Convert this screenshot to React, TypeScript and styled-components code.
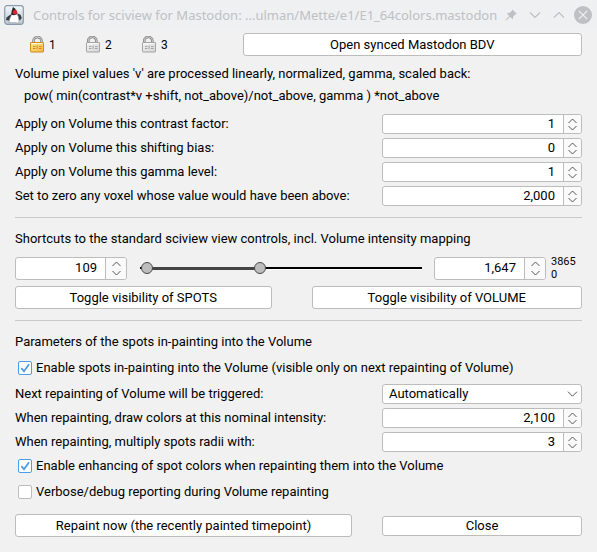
import React, { useId, useState } from "react";
import styled, { createGlobalStyle, css } from "styled-components";

const GlobalStyle = createGlobalStyle`
  *, *::before, *::after { box-sizing: border-box; }
  html, body { margin: 0; background: #f1f1f1; }
  body, button, input, select {
    font-family: Roboto, "Liberation Sans", sans-serif;
    font-size: 13px;
    line-height: 16px;
    color: #000;
  }
`;

const border = "#bcbcbc";

const Window = styled.div`
  min-height: 100vh;
  background: #f1f1f1;
`;

const TitleBar = styled.header`
  display: flex;
  align-items: center;
  height: 29px;
  padding: 0 5px 0 4px;
  background: #eff0f1;
`;

const Title = styled.h1`
  flex: 1;
  min-width: 0;
  margin: 0 0 0 9px;
  overflow: hidden;
  white-space: nowrap;
  text-overflow: ellipsis;
  font-family: "Noto Sans", sans-serif;
  font-size: 13px;
  font-weight: 400;
  line-height: 18px;
  color: #bdc1c4;
`;

const TitleActions = styled.div`
  display: flex;
  gap: 6px;
`;

const TitleButton = styled.button`
  display: flex;
  width: 18px;
  height: 18px;
  padding: 0;
  border: 0;
  background: none;
`;

const Content = styled.main`
  display: flex;
  flex-direction: column;
  padding: 4px 15px 14px;
`;

const TopRow = styled.div`
  display: grid;
  grid-template-columns: 228fr 340fr;
  align-items: center;
`;

const Locks = styled.div`
  display: flex;
  padding-left: 15px;
`;

const LockButton = styled.button`
  display: flex;
  align-items: center;
  gap: 4px;
  width: 56px;
  padding: 0;
  border: 0;
  background: none;
  font-size: 12px;
`;

const PushButton = styled.button<{ $compact?: boolean }>`
  height: ${(p) => (p.$compact ? 20 : 23)}px;
  padding: 0 8px;
  border: 1px solid ${border};
  border-radius: 3px;
  background: #fff;
  text-align: center;
  white-space: nowrap;
`;

const Formula = styled.div`
  display: grid;
  gap: 6px;
  margin: 10px 0;
  white-space: pre;
`;

const FormulaLine = styled.p<{ $indent?: boolean }>`
  margin: 0;
  padding-left: ${(p) => (p.$indent ? 9 : 0)}px;
`;

const Rows = styled.div`
  display: grid;
  gap: 4px;
`;

const FormRow = styled.div`
  display: grid;
  grid-template-columns: minmax(0, 1fr) 200px;
  align-items: center;
`;

const RowLabel = styled.label`
  white-space: nowrap;
`;

const Divider = styled.hr`
  width: 100%;
  height: 1px;
  margin: 11px 0;
  border: 0;
  background: #c9c9c9;
`;

const Heading = styled.h2`
  margin: 0;
  font-size: 13px;
  font-weight: 400;
  line-height: 20px;
`;

const SpinFrame = styled.div<{ $tall?: boolean }>`
  display: flex;
  width: ${(p) => (p.$tall ? "112px" : "100%")};
  height: ${(p) => (p.$tall ? 23 : 20)}px;
  border: 1px solid ${border};
  border-radius: 3px;
  overflow: hidden;
  background: #fff;
`;

const SpinInput = styled.input`
  flex: 1;
  min-width: 0;
  padding: 0 8px;
  border: 0;
  outline: 0;
  background: transparent;
  text-align: right;
`;

const SpinArrows = styled.div<{ $tall?: boolean }>`
  display: flex;
  flex-direction: column;
  justify-content: center;
  gap: ${(p) => (p.$tall ? 3 : 1)}px;
  width: ${(p) => (p.$tall ? 21 : 18)}px;
  border-left: 1px solid ${border};
  background: #fafafa;
`;

const SpinArrow = styled.button`
  display: flex;
  justify-content: center;
  padding: 0;
  border: 0;
  background: none;
`;

const SliderRow = styled.div`
  display: flex;
  align-items: center;
  margin: 6px 0 5px;
`;

const SliderBox = styled.div`
  flex: 1;
  min-width: 0;
  height: 20px;
  padding: 0 10px 0 12px;
`;

const SliderScale = styled.div`
  position: relative;
  height: 20px;
`;

const Track = styled.div`
  position: absolute;
  inset: 9px 2px auto 1px;
  height: 3px;
  border-bottom: 1px solid #fff;
  background: #000;
`;

const TrackFill = styled.div`
  position: absolute;
  top: 9px;
  height: 3px;
  background: #444;
`;

const thumb = css`
  width: 12px;
  height: 12px;
  border: 1px solid #4a4a4a;
  border-radius: 50%;
  background: #bdbdbd;
  pointer-events: auto;
`;

const RangeInput = styled.input`
  position: absolute;
  inset: 0 -6px;
  width: calc(100% + 12px);
  height: 20px;
  margin: 0;
  background: transparent;
  appearance: none;
  pointer-events: none;
  &::-webkit-slider-thumb { appearance: none; ${thumb} }
  &::-moz-range-thumb { ${thumb} }
`;

const Bounds = styled.div`
  width: 36px;
  padding-left: 5px;
  font-size: 11px;
  line-height: 13px;
`;

const ToggleRow = styled.div`
  display: grid;
  grid-template-columns: 257fr 271fr;
  gap: 40px;
`;

const CheckLabel = styled.label<{ $height: number }>`
  display: flex;
  align-items: center;
  gap: 4px;
  height: ${(p) => p.$height}px;
  padding-left: 3px;
  white-space: nowrap;
`;

const CheckBox = styled.span`
  display: grid;
  width: 14px;
  height: 14px;
`;

const CheckInput = styled.input`
  grid-area: 1 / 1;
  width: 14px;
  height: 14px;
  margin: 0;
  border: 1px solid ${border};
  border-radius: 2px;
  background: #fff;
  appearance: none;
  &:checked { border-color: #4d9ee6; }
  &:checked + svg { visibility: visible; }
`;

const CheckMark = styled.svg`
  grid-area: 1 / 1;
  visibility: hidden;
  pointer-events: none;
`;

const SelectFrame = styled.div`
  display: grid;
  align-items: center;
`;

const Select = styled.select`
  grid-area: 1 / 1;
  width: 100%;
  height: 20px;
  padding: 0 24px 0 6px;
  border: 1px solid ${border};
  border-radius: 3px;
  background: #fff;
  appearance: none;
`;

const SelectArrow = styled.svg`
  grid-area: 1 / 1;
  justify-self: end;
  margin-right: 4px;
  pointer-events: none;
`;

const Footer = styled.div`
  display: grid;
  grid-template-columns: minmax(0, 1fr) 200px;
  gap: 30px;
  align-items: center;
  margin-top: 10px;
`;

function DukeIcon() {
  return (
    <svg width="20" height="20" viewBox="0 0 20 20" aria-hidden="true">
      <defs>
        <linearGradient id="duke-bg" x1="0" y1="0" x2="0" y2="1">
          <stop offset="0" stopColor="#f4f7f9" />
          <stop offset="1" stopColor="#b9c6d2" />
        </linearGradient>
      </defs>
      <rect x=".7" y=".7" width="18.6" height="18.6" rx="2.5" fill="url(#duke-bg)" stroke="#8c9baa" strokeWidth="1.2" />
      <path d="M7.500 9 5.500 10.300 2.500 12.500 2 15l2.500.500L7.500 14zM13.500 8.500l3 1.200 1.300 3.300-1.800 2.200-3-2.200z" fill="#3a3c40" />
      <path d="M8 9 5.800 13.500 5 17.800c1.500-1.200 3.200.3 4.800-.2s2.700.8 5.200.2L14.500 12 12.800 8.500z" fill="#fff" stroke="#888" strokeWidth=".5" />
      <path d="M9 2C8 4.500 7.300 7 7.200 9.700l3 .6 3.200-1.300C12.800 6 11.500 3.500 9 2z" fill="#25272a" />
      <circle cx="11" cy="7.200" r="2.200" fill="#e52229" />
    </svg>
  );
}

function LockIcon({ locked }: { locked: boolean }) {
  const id = locked ? "lock-gold" : "lock-grey";
  const edge = locked ? "#d08a1c" : "#a2a2a2";
  const shackle = locked ? "M3.500 7.500V5a4 3.900 0 0 1 8 0v2.500" : "M2.300 6.500V4.600a4 3.500 0 0 1 8-.2V7.500";
  return (
    <svg width="15" height="17" viewBox="0 0 15 17" aria-hidden="true">
      <defs>
        <linearGradient id={id} x1="0" y1="0" x2="1" y2="1">
          <stop offset="0" stopColor={locked ? "#ffe99a" : "#f4f4f4"} />
          <stop offset="1" stopColor={locked ? "#f6b83c" : "#d4d4d4"} />
        </linearGradient>
      </defs>
      <path d={shackle} fill="none" stroke="#858585" strokeWidth="2.600" />
      <path d={shackle} fill="none" stroke="#c9c9c9" strokeWidth="1.100" />
      <rect x=".5" y="6.500" width="13" height="9.500" rx=".6" fill={`url(#${id})`} stroke={edge} />
      <path d="M1.500 7.500h11" stroke="#fff" strokeOpacity=".7" />
      <path d="M3 10.500h2.500M9 10.500h2.500M3 12.500h2.500M9 12.500h2.500M7.200 9.500v3.500" stroke={edge} />
    </svg>
  );
}

function Chevron({ up }: { up?: boolean }) {
  return (
    <svg width="11" height="6" viewBox="0 0 11 6" aria-hidden="true">
      <path d={up ? "M1.500 5 5.500 1l4 4" : "M1.500 1l4 4 4-4"} fill="none" stroke="#555" />
    </svg>
  );
}

interface SpinProps {
  id?: string;
  label?: string;
  value: number;
  tall?: boolean;
  onChange: (value: number) => void;
}

function Spin({ id, label, value, tall, onChange }: SpinProps) {
  return (
    <SpinFrame $tall={tall}>
      <SpinInput
        id={id}
        aria-label={label}
        inputMode="numeric"
        value={value.toLocaleString("en-US")}
        onChange={(e) => onChange(Number(e.target.value.replace(/\D/g, "")))}
      />
      <SpinArrows $tall={tall}>
        <SpinArrow type="button" aria-label="Increase" onClick={() => onChange(value + 1)}>
          <Chevron up />
        </SpinArrow>
        <SpinArrow type="button" aria-label="Decrease" onClick={() => onChange(value - 1)}>
          <Chevron />
        </SpinArrow>
      </SpinArrows>
    </SpinFrame>
  );
}

function SpinRow({ label, initial }: { label: string; initial: number }) {
  const id = useId();
  const [value, setValue] = useState(initial);
  return (
    <FormRow>
      <RowLabel htmlFor={id}>{label}</RowLabel>
      <Spin id={id} value={value} onChange={setValue} />
    </FormRow>
  );
}

function Check({ label, checked, height }: { label: string; checked?: boolean; height: number }) {
  return (
    <CheckLabel $height={height}>
      <CheckBox>
        <CheckInput type="checkbox" defaultChecked={checked} />
        <CheckMark width="14" height="14" viewBox="0 0 14 14" aria-hidden="true">
          <path d="M3.300 7.200 6 10.200 11 3.300" fill="none" stroke="#4d9ee6" strokeWidth="1.800" />
        </CheckMark>
      </CheckBox>
      {label}
    </CheckLabel>
  );
}

const maxIntensity = 3865;

function IntensityRange() {
  const [low, setLow] = useState(109);
  const [high, setHigh] = useState(1647);
  const start = (low / maxIntensity) * 100;
  const span = ((high - low) / maxIntensity) * 100;
  return (
    <SliderRow>
      <Spin tall label="Minimum intensity" value={low} onChange={setLow} />
      <SliderBox>
        <SliderScale>
          <Track />
          <TrackFill style={{ left: `${start}%`, width: `${span}%` }} />
          <RangeInput
            type="range"
            aria-label="Minimum intensity"
            max={maxIntensity}
            value={low}
            onChange={(e) => setLow(Math.min(Number(e.target.value), high))}
          />
          <RangeInput
            type="range"
            aria-label="Maximum intensity"
            max={maxIntensity}
            value={high}
            onChange={(e) => setHigh(Math.max(Number(e.target.value), low))}
          />
        </SliderScale>
      </SliderBox>
      <Spin tall label="Maximum intensity" value={high} onChange={setHigh} />
      <Bounds>
        <div>3865</div>
        <div>0</div>
      </Bounds>
    </SliderRow>
  );
}

function LockGroup() {
  const [active, setActive] = useState(1);
  return (
    <Locks>
      {[1, 2, 3].map((n) => (
        <LockButton key={n} type="button" aria-pressed={active === n} onClick={() => setActive(n)}>
          <LockIcon locked={active === n} />
          {n}
        </LockButton>
      ))}
    </Locks>
  );
}

function WindowButtons() {
  return (
    <TitleActions>
      <TitleButton type="button" aria-label="Keep above">
        <svg width="18" height="18" viewBox="0 0 18 18">
          <path d="M10.500 3.500 15 8l-1.500.3-2.300 2.300-.3 3L8 10.800 4 14.500l-.6-.6L7.200 10 4.700 7.200l3-.4L10 4.700z" fill="#bdc1c4" />
        </svg>
      </TitleButton>
      <TitleButton type="button" aria-label="Minimize">
        <svg width="18" height="18" viewBox="0 0 18 18">
          <path d="M4 6.500l5 5 5-5" fill="none" stroke="#bdc1c4" strokeWidth="1.200" />
        </svg>
      </TitleButton>
      <TitleButton type="button" aria-label="Maximize">
        <svg width="18" height="18" viewBox="0 0 18 18">
          <path d="M4 11.500l5-5 5 5" fill="none" stroke="#bdc1c4" strokeWidth="1.200" />
        </svg>
      </TitleButton>
      <TitleButton type="button" aria-label="Close window">
        <svg width="18" height="18" viewBox="0 0 18 18">
          <circle cx="9" cy="9" r="9" fill="#bdc1c4" />
          <path d="M4.800 4.800l8.400 8.400M13.200 4.800l-8.400 8.400" stroke="#eff0f1" strokeWidth="1.200" />
        </svg>
      </TitleButton>
    </TitleActions>
  );
}

export default function App() {
  return (
    <Window>
      <GlobalStyle />
      <TitleBar>
        <DukeIcon />
        <Title>Controls for sciview for Mastodon: ...ulman/Mette/e1/E1_64colors.mastodon</Title>
        <WindowButtons />
      </TitleBar>
      <Content>
        <TopRow>
          <LockGroup />
          <PushButton type="button">Open synced Mastodon BDV</PushButton>
        </TopRow>
        <Formula>
          <FormulaLine>Volume pixel values 'v' are processed linearly, normalized, gamma, scaled back:</FormulaLine>
          <FormulaLine $indent>pow( min(contrast*v +shift, not_above)/not_above, gamma ) *not_above</FormulaLine>
        </Formula>
        <Rows>
          <SpinRow label="Apply on Volume this contrast factor:" initial={1} />
          <SpinRow label="Apply on Volume this shifting bias:" initial={0} />
          <SpinRow label="Apply on Volume this gamma level:" initial={1} />
          <SpinRow label="Set to zero any voxel whose value would have been above:" initial={2000} />
        </Rows>
        <Divider />
        <Heading>Shortcuts to the standard sciview view controls, incl. Volume intensity mapping</Heading>
        <IntensityRange />
        <ToggleRow>
          <PushButton type="button">Toggle visibility of SPOTS</PushButton>
          <PushButton type="button">Toggle visibility of VOLUME</PushButton>
        </ToggleRow>
        <Divider />
        <Heading>Parameters of the spots in-painting into the Volume</Heading>
        <Check label="Enable spots in-painting into the Volume (visible only on next repainting of Volume)" checked height={32} />
        <Rows>
          <FormRow>
            <RowLabel htmlFor="trigger">Next repainting of Volume will be triggered:</RowLabel>
            <SelectFrame>
              <Select id="trigger">
                <option>Automatically</option>
              </Select>
              <SelectArrow width="11" height="6" viewBox="0 0 11 6" aria-hidden="true">
                <path d="M1 .700l4.500 4.500L10 .700" fill="none" stroke="#555" />
              </SelectArrow>
            </SelectFrame>
          </FormRow>
          <SpinRow label="When repainting, draw colors at this nominal intensity:" initial={2100} />
          <SpinRow label="When repainting, multiply spots radii with:" initial={3} />
        </Rows>
        <Check label="Enable enhancing of spot colors when repainting them into the Volume" checked height={28} />
        <Check label="Verbose/debug reporting during Volume repainting" height={24} />
        <Footer>
          <PushButton type="button">Repaint now (the recently painted timepoint)</PushButton>
          <PushButton type="button" $compact>Close</PushButton>
        </Footer>
      </Content>
    </Window>
  );
}
